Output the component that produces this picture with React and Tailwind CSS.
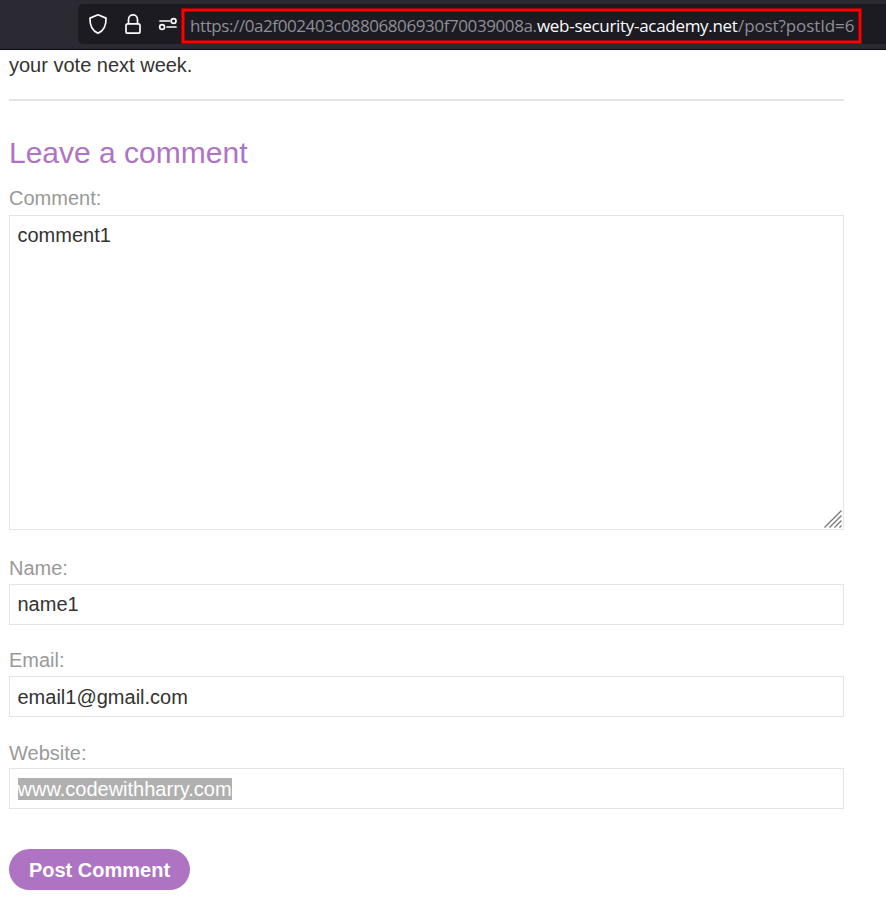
import React from "react";

function Toolbar() {
  return (
    <header className="flex h-[50px] border-b border-[#0c0b10] bg-[#2b2a33] pt-1 pl-[78px]">
      <div className="flex h-10 flex-1 items-start rounded-l-[5px] bg-[#1c1b22]">
        <svg className="h-10 w-[103px] shrink-0" viewBox="0 0 103 40" fill="none" stroke="#fbfbfe" strokeWidth="1.7" strokeLinecap="round" strokeLinejoin="round">
          <path d="M20 10.8 L28 14.1 C28.3 20.5 26.3 26.5 20 29.3 C13.7 26.5 11.7 20.5 12 14.1 Z" />
          <rect x="48" y="19.8" width="14" height="9.4" rx="1.8" />
          <path d="M50.5 19.5 V15.5 C50.5 9.3 59.5 9.3 59.5 15.5 V19.5" />
          <path d="M82 17 H91.5 M89 23 H98" />
          <circle cx="95.6" cy="17" r="2.4" />
          <circle cx="84.1" cy="23" r="2.4" />
        </svg>
        <div className="mt-1 flex h-[36px] w-[681px] shrink-0 items-center border border-[#980609] bg-[#1c1b22]">
          <div className="flex h-full w-full items-center border-2 border-[#ff0000] pl-[6px] font-['Open_Sans','Noto_Sans',sans-serif] text-[17px] whitespace-nowrap text-[#8f8f96] shadow-[inset_0_0_0_1px_#980609]">
            <span className="w-[347px] shrink-0 tracking-[-0.41px]">https://0a2f002403c08806806930f70039008a.</span>
            <span className="w-[201px] shrink-0 tracking-[-0.3px] text-[#fbfbfe]">web-security-academy.net</span>
            <span className="tracking-[-0.1px]">/post?postId=6</span>
          </div>
        </div>
      </div>
    </header>
  );
}

function Field({ label, labelClass, valueClass, children }) {
  return (
    <div className="flex flex-col">
      <label className={`h-[29px] leading-[24px] text-[#999999] ${labelClass}`}>{label}</label>
      <div className={`h-[41px] border border-[#e4e4e4] pl-[7.5px] ${valueClass}`}>{children}</div>
    </div>
  );
}

export default function App() {
  return (
    <div className="h-[906px] w-[886px] overflow-hidden bg-white font-['Liberation_Sans',Arial,sans-serif] text-[20px] text-[#333332]">
      <Toolbar />
      <main className="ml-[9px] w-[835px]">
        <p className="h-[49px] pt-[3px] leading-[24px]">your vote next week.</p>
        <hr className="border-t-2 border-[#e4e4e4]" />
        <h1 className="mt-[34px] h-[51px] text-[30px] leading-[36px] text-[#ae74c3]">Leave a comment</h1>
        <label className="block h-[29px] leading-[24px] text-[#999999]">Comment:</label>
        <div className="flex h-[315px] justify-between border border-[#e4e4e4] pt-[7px] pl-[7.5px]">
          <span className="leading-[24px]">comment1</span>
          <svg className="h-[20px] w-[20px] self-end" viewBox="0 0 20 20" stroke="#777777" strokeWidth="1.3">
            <path d="M1.5 18.5 L18.5 1.5 M6.5 18.5 L18.5 6.5 M11.5 18.5 L18.5 11.5 M16.5 18.5 L18.5 16.5" />
          </svg>
        </div>
        <div className="mt-[25px] flex flex-col gap-[22px]">
          <Field label="Name:" labelClass="pt-px" valueClass="leading-[38px]">name1</Field>
          <Field label="Email:" labelClass="pt-px" valueClass="leading-[40px]">email1@gmail.com</Field>
          <Field label="Website:" labelClass="pt-[2px]" valueClass="leading-[40px]">
            <span className="bg-[#b0b0b0] text-white">www.codewithharry.com</span>
          </Field>
        </div>
        <button className="mt-[40px] h-[41px] w-[181px] rounded-full bg-[#ae74c3] text-[20px] font-bold text-white">Post Comment</button>
      </main>
    </div>
  );
}
